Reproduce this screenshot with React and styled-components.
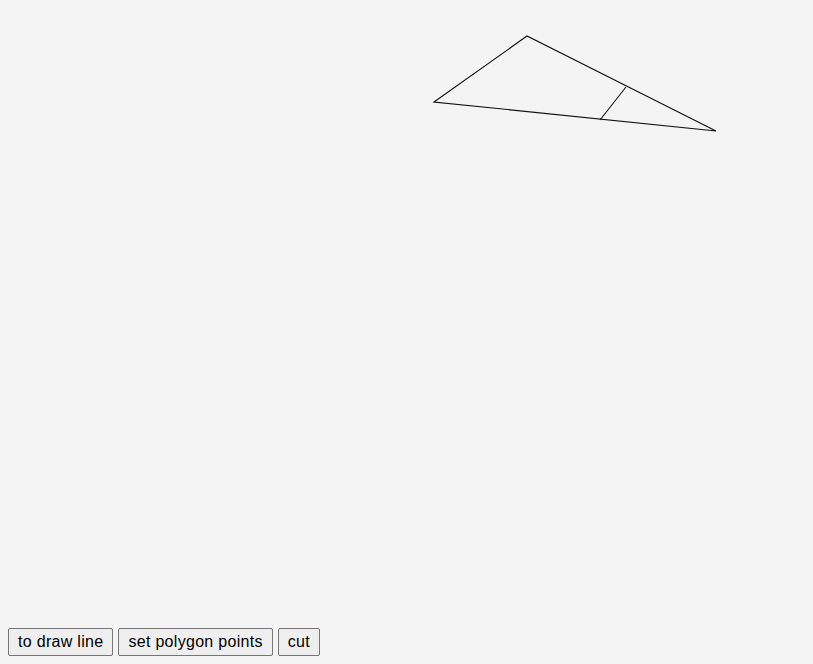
import React from "react";
import styled, { createGlobalStyle } from "styled-components";

const GlobalStyle = createGlobalStyle`
  html, body {
    margin: 0;
    background: #f4f4f4;
  }
  body {
    padding: 8px;
    font-family: "Liberation Sans", Arial, sans-serif;
  }
`;

const Board = styled.svg`
  display: block;
  width: 805px;
  height: 620px;
`;

const Toolbar = styled.div`
  display: flex;
  gap: 5px;
`;

const Button = styled.button`
  height: 28px;
  padding: 0 9px;
  font-family: "Liberation Sans", Arial, sans-serif;
  font-size: 16px;
  letter-spacing: 0.3px;
  color: #000;
  background: #efefef;
  border: 1px solid #767676;
  border-radius: 2px;
  cursor: pointer;
`;

const polygon = [
  [426, 94],
  [519, 28],
  [708, 123],
];
const cutLine = [
  [618, 79],
  [592, 112],
];

const App = () => {
  return (
    <>
      <GlobalStyle />
      <Board viewBox="0 0 805 620">
        <polygon
          points={polygon.map((p) => p.join(",")).join(" ")}
          fill="none"
          stroke="#111"
          strokeWidth="1.1"
        />
        <line
          x1={cutLine[0][0]}
          y1={cutLine[0][1]}
          x2={cutLine[1][0]}
          y2={cutLine[1][1]}
          stroke="#111"
          strokeWidth="1.1"
        />
      </Board>
      <Toolbar>
        <Button>to draw line</Button>
        <Button>set polygon points</Button>
        <Button>cut</Button>
      </Toolbar>
    </>
  );
};

export default App;
